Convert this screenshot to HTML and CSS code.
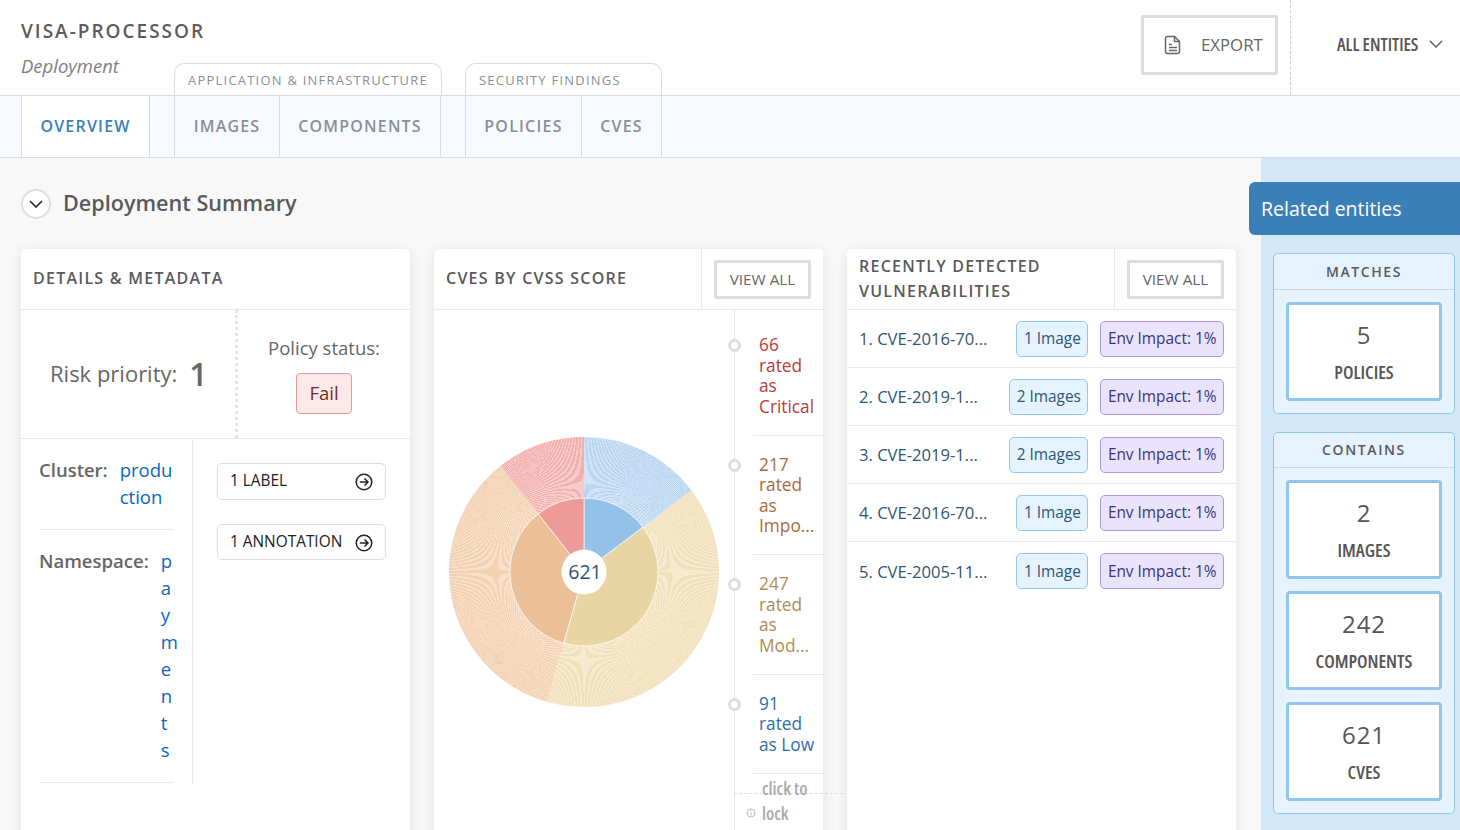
FILE: index.html
```html
<!doctype html>
<html lang="en">
<head>
  <meta charset="UTF-8" />
  <title>visa-processor</title>
  <link rel="stylesheet" href="styles.css">
</head>
<body>

  <header class="top_bar">
    <div class="entity_name">
      <h1>VISA-PROCESSOR</h1>
      <p>Deployment</p>
    </div>
    <button class="export_btn">
      <svg width="18" height="20" viewBox="0 0 18 20" fill="none" stroke="#666" stroke-width="1.5"><path d="M3.5 1.5h7l5 5v10a2 2 0 0 1-2 2h-10a2 2 0 0 1-2-2v-13a2 2 0 0 1 2-2z"/><path d="M10.5 1.5v5h5M5 9.5h3M5 12.5h8M5 15.5h8"/></svg>
      <span>EXPORT</span>
    </button>
    <div class="entity_select">
      <span>ALL ENTITIES</span>
      <svg width="14" height="8" viewBox="0 0 14 8" fill="none" stroke="#555" stroke-width="1.4"><path d="M1 1l6 6 6-6"/></svg>
    </div>
  </header>

  <nav class="tab_bar">
    <a class="tab tab_active">OVERVIEW</a>
    <div class="tab_group">
      <div class="group_label">APPLICATION &amp; INFRASTRUCTURE</div>
      <div class="group_tabs">
        <a class="tab tab_images">IMAGES</a>
        <a class="tab tab_components">COMPONENTS</a>
      </div>
    </div>
    <div class="tab_group tab_group_last">
      <div class="group_label">SECURITY FINDINGS</div>
      <div class="group_tabs">
        <a class="tab tab_policies">POLICIES</a>
        <a class="tab tab_cves">CVES</a>
      </div>
    </div>
  </nav>

  <div class="page_body">
    <main class="content">
      <div class="section_head">
        <span class="collapse_btn">
          <svg width="14" height="8" viewBox="0 0 14 8" fill="none" stroke="#222" stroke-width="1.6"><path d="M1 1l6 6 6-6"/></svg>
        </span>
        <h2>Deployment Summary</h2>
      </div>

      <div class="cards">
        <section class="card">
          <div class="card_head"><h3>DETAILS &amp; METADATA</h3></div>
          <div class="risk_row">
            <div class="risk_cell">
              <span class="risk_label">Risk priority:</span>
              <span class="risk_num">1</span>
            </div>
            <div class="policy_cell">
              <span class="policy_label">Policy status:</span>
              <span class="fail_chip">Fail</span>
            </div>
          </div>
          <div class="meta_row">
            <div class="meta_fields">
              <div class="field">
                <span class="field_label">Cluster:</span>
                <a class="field_value">production</a>
              </div>
              <div class="field">
                <span class="field_label">Namespace:</span>
                <a class="field_value">payments</a>
              </div>
            </div>
            <div class="meta_links">
              <button class="link_btn">1 LABEL
                <svg width="18" height="18" viewBox="0 0 18 18" fill="none" stroke="#222" stroke-width="1.5"><circle cx="9" cy="9" r="7.75"/><path d="M4.8 9h8M9.5 5.5L13 9l-3.5 3.5"/></svg>
              </button>
              <button class="link_btn">1 ANNOTATION
                <svg width="18" height="18" viewBox="0 0 18 18" fill="none" stroke="#222" stroke-width="1.5"><circle cx="9" cy="9" r="7.75"/><path d="M4.8 9h8M9.5 5.5L13 9l-3.5 3.5"/></svg>
              </button>
            </div>
          </div>
        </section>

        <section class="card">
          <div class="card_head">
            <h3>CVES BY CVSS SCORE</h3>
            <div class="head_action"><button class="view_all">VIEW ALL</button></div>
          </div>
          <div class="chart_body">
            <div class="chart_col">
              <svg class="sunburst" width="270" height="270" viewBox="-135 -135 270 270">
                <!-- outer ring -->
                <path fill="#b8d6f1" d="M0 -135A135 135 0 0 1 107.5 -81.7L59 -44.8A74 74 0 0 0 0 -74Z"/>
                <path fill="#f1e0b9" d="M107.5 -81.7A135 135 0 0 1 -37 129.8L-20.3 71.2A74 74 0 0 0 59 -44.8Z"/>
                <path fill="#f2d0b0" d="M-37 129.8A135 135 0 0 1 -83.6 -106L-45.8 -58.1A74 74 0 0 0 -20.3 71.2Z"/>
                <path fill="#f1b0ae" d="M-83.6 -106A135 135 0 0 1 0 -135L0 -74A74 74 0 0 0 -45.8 -58.1Z"/>
                <circle class="ring_lines" r="104.5"/>
                <!-- inner ring -->
                <path fill="#94c1e8" stroke="#fff" stroke-width=".7" d="M0 -74A74 74 0 0 1 59 -44.8L0 0Z"/>
                <path fill="#e9d4a4" stroke="#fff" stroke-width=".7" d="M59 -44.8A74 74 0 0 1 -20.3 71.2L0 0Z"/>
                <path fill="#ebbf98" stroke="#fff" stroke-width=".7" d="M-20.3 71.2A74 74 0 0 1 -45.8 -58.1L0 0Z"/>
                <path fill="#ec9b98" stroke="#fff" stroke-width=".7" d="M-45.8 -58.1A74 74 0 0 1 0 -74L0 0Z"/>
                <circle r="22.5" fill="#fff"/>
                <text class="chart_total" x="1" y="7" text-anchor="middle">621</text>
              </svg>
            </div>
            <ul class="legend">
              <li class="critical">66 rated as Critical</li>
              <li class="important">217 rated as Impo...</li>
              <li class="moderate">247 rated as Mod...</li>
              <li class="low">91 rated as Low</li>
            </ul>
            <div class="lock_hint">
              <svg width="10" height="10" viewBox="0 0 10 10" fill="none" stroke="#bbb"><circle cx="5" cy="5" r="4"/><path d="M5 4.500v3M5 2.500v1"/></svg>
              <span>click to lock</span>
            </div>
          </div>
        </section>

        <section class="card">
          <div class="card_head">
            <h3>RECENTLY DETECTED VULNERABILITIES</h3>
            <div class="head_action"><button class="view_all">VIEW ALL</button></div>
          </div>
          <div class="cve_row">
            <span class="cve_name">1. CVE-2016-70...</span>
            <span class="chip chip_blue">1 Image</span>
            <span class="chip chip_purple">Env Impact: 1%</span>
          </div>
          <div class="cve_row">
            <span class="cve_name">2. CVE-2019-1...</span>
            <span class="chip chip_blue">2 Images</span>
            <span class="chip chip_purple">Env Impact: 1%</span>
          </div>
          <div class="cve_row">
            <span class="cve_name">3. CVE-2019-1...</span>
            <span class="chip chip_blue">2 Images</span>
            <span class="chip chip_purple">Env Impact: 1%</span>
          </div>
          <div class="cve_row">
            <span class="cve_name">4. CVE-2016-70...</span>
            <span class="chip chip_blue">1 Image</span>
            <span class="chip chip_purple">Env Impact: 1%</span>
          </div>
          <div class="cve_row">
            <span class="cve_name">5. CVE-2005-11...</span>
            <span class="chip chip_blue">1 Image</span>
            <span class="chip chip_purple">Env Impact: 1%</span>
          </div>
        </section>
      </div>
    </main>

    <aside class="sidebar">
      <div class="side_title">Related entities</div>
      <div class="side_panel">
        <h4>MATCHES</h4>
        <div class="tiles">
          <a class="tile"><b>5</b><span>POLICIES</span></a>
        </div>
      </div>
      <div class="side_panel">
        <h4>CONTAINS</h4>
        <div class="tiles">
          <a class="tile"><b>2</b><span>IMAGES</span></a>
          <a class="tile"><b>242</b><span>COMPONENTS</span></a>
          <a class="tile"><b>621</b><span>CVES</span></a>
        </div>
      </div>
    </aside>
  </div>

</body>
</html>
```

FILE: styles.css
```css
* {
  box-sizing: border-box;
}

html, body {
  height: 830px;
  overflow: hidden;
}

body {
  margin: 0;
  font-family: "Open Sans", sans-serif;
  color: #555;
  background: #f8f8f8;
}

h1, h2, h3, h4, p, ul {
  margin: 0;
  padding: 0;
}

button {
  font-family: inherit;
  background: #fff;
}

/* top bar */
.top_bar {
  height: 96px;
  display: flex;
  align-items: flex-start;
  background: #fff;
  border-bottom: 1px solid #d8dde2;
}

.entity_name {
  flex: 1;
  padding: 18px 0 0 21px;
}

.entity_name h1 {
  font-size: 19px;
  line-height: 26px;
  font-weight: 600;
  letter-spacing: 2px;
  color: #5c5c5c;
}

.entity_name p {
  margin-top: 9px;
  font-size: 18.500px;
  line-height: 26px;
  font-style: italic;
  color: #808080;
}

.export_btn {
  width: 137px;
  height: 60px;
  margin: 15px 12px 0 0;
  display: flex;
  align-items: center;
  gap: 19px;
  padding: 0 0 0 20px;
  border: 3px solid #ddd;
  border-radius: 2px;
  font-size: 16.800px;
  color: #666;
}

.export_btn span {
  margin-top: -2px;
}

.entity_select {
  width: 170px;
  height: 95px;
  display: flex;
  align-items: center;
  gap: 11px;
  padding: 0 0 7px 46px;
  border-left: 1px dashed #ccc;
  font-size: 17.800px;
  font-weight: 600;
  font-stretch: condensed;
  color: #555;
}

/* tabs */
.tab_bar {
  height: 62px;
  display: flex;
  gap: 24px;
  padding-left: 21px;
  background: #f7fbff;
  border-bottom: 1px solid #d8dde2;
}

.tab {
  height: 61px;
  display: flex;
  align-items: center;
  justify-content: center;
  padding-bottom: 2px;
  font-size: 16px;
  font-weight: 600;
  letter-spacing: 1.2px;
  color: #8b8f94;
  border-right: 1px solid #d8dde2;
}

.tab_active {
  width: 129px;
  background: #fff;
  color: #3b7fb9;
  border-left: 1px solid #d8dde2;
}

.tab_group {
  margin-top: -33px;
}

.tab_group_last {
  margin-left: -1px;
}

.group_label {
  height: 32px;
  padding: 7px 13px 0;
  background: #fff;
  border: 1px solid #d8dde2;
  border-bottom: 0;
  border-radius: 10px 10px 0 0;
  font-size: 13px;
  line-height: 18px;
  letter-spacing: 1.22px;
  color: #8b8f94;
  white-space: nowrap;
}

.group_tabs {
  display: flex;
  margin-top: 1px;
  border-left: 1px solid #d8dde2;
}

.tab_images { width: 105px; }
.tab_components { width: 161px; }
.tab_policies { width: 116px; }
.tab_cves { width: 80px; }

/* page body */
.page_body {
  display: flex;
  height: 672px;
}

.content {
  flex: 1;
  padding: 24px 0 0 21px;
  overflow: hidden;
}

.section_head {
  height: 44px;
  display: flex;
  align-items: center;
  gap: 12px;
}

.section_head h2 {
  margin-top: -3px;
  font-size: 21.600px;
  font-weight: 600;
  color: #5a5a5a;
}

.collapse_btn {
  width: 30px;
  height: 30px;
  display: flex;
  align-items: center;
  justify-content: center;
  background: #fff;
  border: 2px solid #ddd;
  border-radius: 50%;
}

.cards {
  margin-top: 23px;
  display: flex;
  gap: 24px;
}

.card {
  width: 389px;
  height: 640px;
  flex: none;
  background: #fff;
  border-radius: 5px;
  box-shadow: 0 2px 14px rgba(0, 0, 0, .09);
}

.card_head {
  height: 61px;
  display: flex;
  align-items: center;
  border-bottom: 1px solid #e8e8e8;
}

.card_head h3 {
  flex: 1;
  margin-top: -1px;
  padding-left: 12px;
  font-size: 16px;
  line-height: 25px;
  font-weight: 600;
  letter-spacing: 1.25px;
  color: #5a5a5a;
}

.head_action {
  height: 60px;
  width: 122px;
  display: flex;
  align-items: center;
  justify-content: center;
  border-left: 1px solid #e8e8e8;
}

.view_all {
  width: 97px;
  height: 39px;
  padding-bottom: 2px;
  border: 3px solid #ddd;
  border-radius: 2px;
  font-size: 15.300px;
  color: #666;
}

/* details card */
.risk_row {
  height: 129px;
  display: flex;
  border-bottom: 1px solid #e8e8e8;
}

.risk_cell {
  width: 217px;
  display: flex;
  align-items: center;
  gap: 12px;
  padding: 0 0 2px 29px;
  border-right: 3px dotted #e4e4e4;
}

.risk_label {
  font-size: 22px;
  color: #666;
}

.risk_num {
  font-size: 32px;
  font-weight: 600;
  color: #666;
}

.policy_cell {
  flex: 1;
  display: flex;
  flex-direction: column;
  align-items: center;
  padding-top: 25px;
}

.policy_label {
  font-size: 18.500px;
  line-height: 26px;
  color: #666;
}

.fail_chip {
  width: 56px;
  height: 41px;
  margin-top: 12px;
  padding-bottom: 2px;
  display: flex;
  align-items: center;
  justify-content: center;
  background: #fde8e8;
  border: 1px solid #ea9a9a;
  border-radius: 4px;
  font-size: 18.500px;
  color: #6e2c2c;
}

.meta_row {
  display: flex;
  height: 344px;
}

.meta_fields {
  width: 172px;
  padding: 18px 18px 0;
  border-right: 1px solid #e8e8e8;
}

.field {
  display: flex;
  gap: 12px;
  padding-bottom: 19px;
  margin-bottom: 18px;
  border-bottom: 1px solid #e8e8e8;
  font-size: 18.500px;
  line-height: 27px;
}

.field_label {
  flex: none;
  margin-top: -1px;
  font-weight: 600;
  color: #666;
}

.field_value {
  flex: 1;
  min-width: 0;
  margin-top: -1px;
  color: #0a66c2;
  word-break: break-all;
}

.meta_links {
  flex: 1;
  padding: 24px 24px 0;
  display: flex;
  flex-direction: column;
  gap: 24px;
}

.link_btn {
  height: 37px;
  display: flex;
  align-items: center;
  justify-content: space-between;
  padding: 0 12px 2px 12px;
  border: 1px solid #ddd;
  border-radius: 5px;
  font-size: 15.400px;
  color: #222;
}

.link_btn svg {
  margin-top: 2px;
}

.link_btn + .link_btn {
  height: 36px;
  padding-bottom: 1px;
}

/* chart card */
.chart_body {
  position: relative;
  display: flex;
  height: 579px;
}

.chart_col {
  width: 300px;
  padding-top: 127px;
  text-align: center;
}

.sunburst {
  display: block;
  margin: 0 auto;
}

.ring_lines {
  fill: none;
  stroke: #fff;
  stroke-opacity: .35;
  stroke-width: 61;
  stroke-dasharray: .6 .6;
  shape-rendering: crispEdges;
}

.chart_total {
  font-family: "Open Sans", sans-serif;
  font-size: 19.500px;
  fill: #2f5575;
}

.legend {
  flex: 1;
  list-style: none;
  border-left: 1px solid #e8e8e8;
  font-size: 17.300px;
  line-height: 20.500px;
}

.legend li {
  position: relative;
  margin-left: 18px;
  padding: 19px 4px 17.500px 6px;
  border-bottom: 1px solid #e8e8e8;
}

.legend li:first-child {
  padding-top: 25px;
}

.legend li::before {
  content: "";
  position: absolute;
  left: -25px;
  top: 23px;
  box-sizing: border-box;
  width: 13px;
  height: 13px;
  background: #fff;
  border: 3px solid #ddd;
  border-radius: 50%;
}

.legend li:first-child::before {
  top: 29px;
}

.critical { color: #b83c3c; }
.important { color: #a96b3e; }
.moderate { color: #ae8c55; }
.low { color: #2f6ea9; }

.lock_hint {
  position: absolute;
  left: 300px;
  top: 483px;
  width: 109px;
  height: 40px;
  padding-left: 12px;
  display: flex;
  align-items: flex-start;
  gap: 6px;
  border-top: 1px dashed #ddd;
  font-size: 17.800px;
  line-height: 25px;
  font-weight: 600;
  font-stretch: condensed;
  color: #aaa;
}

.lock_hint svg {
  margin-top: 14px;
}

.lock_hint span {
  width: 50px;
  margin-top: -18px;
}

/* vulnerabilities card */
.cve_row {
  height: 58px;
  display: flex;
  align-items: center;
  gap: 12px;
  padding: 0 12px;
  border-bottom: 1px solid #e8e8e8;
}

.cve_row:last-child {
  border-bottom: 0;
}

.cve_name {
  flex: 1;
  font-size: 16.600px;
  color: #2f5575;
  white-space: nowrap;
}

.chip {
  height: 36px;
  display: flex;
  align-items: center;
  padding: 0 6.500px;
  border-radius: 5px;
  font-size: 15.400px;
}

.chip_blue {
  background: #e5f3fe;
  border: 1px solid #96c6ec;
  color: #2f5575;
}

.chip_purple {
  background: #e9e4fb;
  border: 1px solid #a898e3;
  color: #3b3479;
}

/* related entities */
.sidebar {
  width: 199px;
  flex: none;
  background: #d3e7f9;
  padding: 24px 5px 0 12px;
}

.side_title {
  height: 53px;
  margin: 0 -5px 18px -24px;
  padding-left: 12px;
  display: flex;
  align-items: center;
  background: #3b7fb9;
  border-radius: 6px 0 0 6px;
  font-size: 19.500px;
  color: #fff;
}

.side_panel {
  margin-bottom: 18px;
  background: #e6f3fe;
  border: 1px solid #93c5ea;
  border-radius: 5px;
}

.side_panel h4 {
  height: 35.500px;
  display: flex;
  align-items: center;
  justify-content: center;
  border-bottom: 1px solid #cfd8e0;
  font-size: 14px;
  font-weight: 600;
  letter-spacing: 1.6px;
  color: #5a5a5a;
}

.tiles {
  display: flex;
  flex-direction: column;
  gap: 12px;
  padding: 12px;
}

.tile {
  height: 99px;
  display: flex;
  flex-direction: column;
  align-items: center;
  padding-top: 13px;
  background: #fff;
  border: 3px solid #92c5eb;
  border-radius: 4px;
  color: #555;
}

.tile b {
  font-size: 24px;
  line-height: 34px;
  font-weight: 400;
  letter-spacing: 1px;
}

.tile span {
  margin-top: 9px;
  font-size: 18.500px;
  line-height: 22px;
  font-weight: 600;
  font-stretch: condensed;
}
```
